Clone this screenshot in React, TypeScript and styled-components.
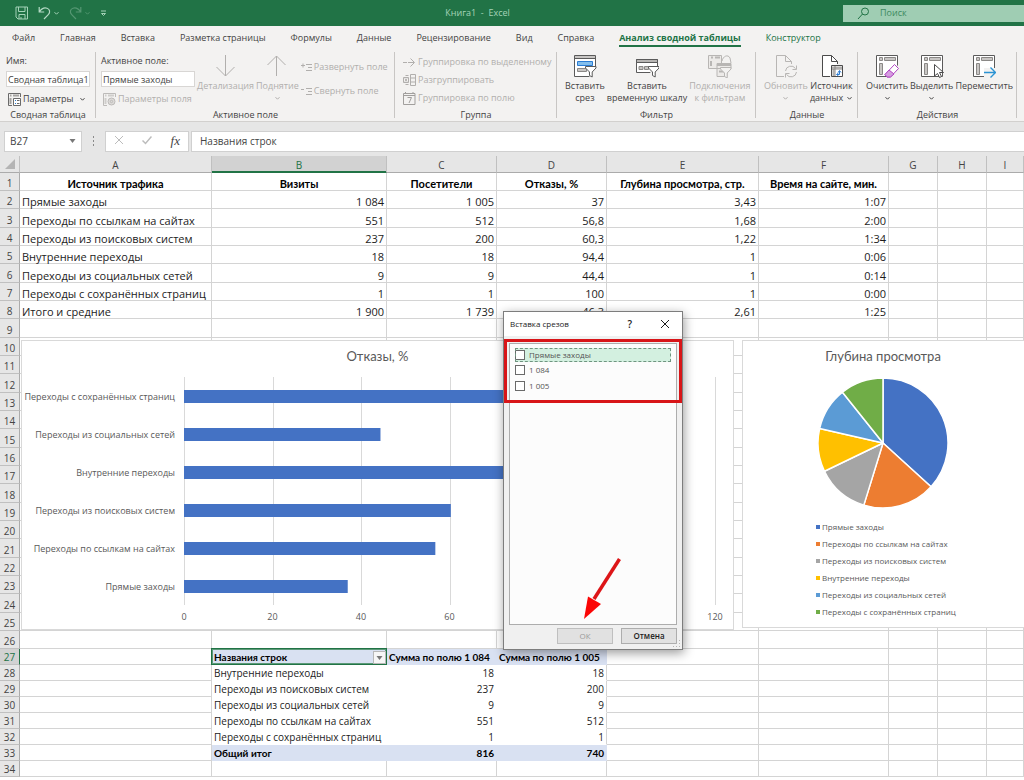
import React from "react";
import styled, { createGlobalStyle, css } from "styled-components";

const green = "#217346";
const ink = "#444444";
const faded = "#b1afad";
const gridLine = "#d4d4d4";
const titleFont = `Lato, "Open Sans", sans-serif`;

const GlobalStyle = createGlobalStyle`
  * { box-sizing: border-box; }
  body {
    margin: 0;
    background: #ffffff;
    font-family: "Open Sans", "Noto Sans", sans-serif;
    font-size: 9px;
    line-height: 12px;
    color: ${ink};
    overflow: hidden;
  }
  button, input { font: inherit; color: inherit; }
  button { background: none; border: 0; padding: 0; }
`;

/* ---------- title bar ---------- */

const TitleBar = styled.header`
  display: flex;
  align-items: center;
  height: 26px;
  background: ${green};
`;

const QuickAccess = styled.div`
  display: flex;
  align-items: center;
  gap: 9px;
  width: 112px;
  padding-left: 15px;
`;

const QuickButton = styled.button<{ $dim?: boolean }>`
  display: flex;
  align-items: center;
  gap: 2px;
  opacity: ${(p) => (p.$dim ? 0.35 : 1)};
`;

const WindowTitle = styled.div`
  flex: 1;
  text-align: center;
  white-space: pre;
  color: #a5d3b8;
`;

const SearchBox = styled.label`
  display: flex;
  align-items: center;
  gap: 10px;
  width: 181px;
  height: 17px;
  padding-left: 14px;
  background: #9fcdb3;
  color: ${green};
  input {
    width: 120px;
    padding: 0;
    border: 0;
    background: none;
    outline: 0;
    &::placeholder { color: #3d8a60; opacity: 1; }
  }
`;

/* ---------- ribbon ---------- */

const Tabs = styled.nav`
  display: flex;
  gap: 25px;
  height: 24px;
  padding: 2px 12px 0;
  background: #f3f2f1;
`;

const Tab = styled.a<{ $active?: boolean; $context?: boolean }>`
  height: 19px;
  font-size: 9px;
  line-height: 19px;
  white-space: nowrap;
  text-decoration: none;
  color: ${(p) => (p.$active || p.$context ? green : ink)};
  ${(p) =>
    p.$active &&
    css`
      font-weight: 700;
      border-bottom: 2px solid ${green};
    `}
`;

const Ribbon = styled.section`
  display: flex;
  height: 72px;
  padding-top: 2px;
  background: #f3f2f1;
  border-bottom: 1px solid #d2d0ce;
`;

const Group = styled.div<{ $width: number }>`
  display: flex;
  flex-direction: column;
  flex: none;
  width: ${(p) => p.$width}px;
  background: linear-gradient(#c8c6c4, #c8c6c4) right top / 1px 66px no-repeat;
`;

const GroupBody = styled.div<{ $pad?: number }>`
  display: flex;
  gap: 2px;
  height: 58px;
  padding: 2px ${(p) => p.$pad ?? 8}px 0;
`;

const GroupName = styled.div`
  text-align: center;
`;

const FieldStack = styled.div<{ $width: number }>`
  display: flex;
  flex-direction: column;
  flex: none;
  width: ${(p) => p.$width}px;
  label { height: 17px; line-height: 14px; }
  input {
    width: 100%;
    height: 16px;
    padding: 0 1px;
    border: 1px solid #d8d6d4;
    background: #ffffff;
    outline: 0;
  }
`;

const SmallButton = styled.button<{ $off?: boolean }>`
  display: flex;
  align-items: center;
  gap: 2px;
  height: 16px;
  white-space: nowrap;
  color: ${(p) => (p.$off ? faded : ink)};
  svg { flex: none; }
`;

const OptionsButton = styled(SmallButton)`
  margin-top: 4px;
  padding-left: 2px;
`;

const OptionsText = styled.span`
  flex: none;
  margin-right: 4px;
`;

const Stack = styled.div<{ $gap: number; $top?: number }>`
  display: flex;
  flex-direction: column;
  gap: ${(p) => p.$gap}px;
  padding-top: ${(p) => p.$top ?? 0}px;
`;

const BigButtonBox = styled.button<{ $off?: boolean }>`
  display: flex;
  flex-direction: column;
  align-items: center;
  flex: none;
  gap: 2px;
  line-height: 12px;
  white-space: nowrap;
  color: ${(p) => (p.$off ? faded : ink)};
  svg { flex: none; }
`;

const BigLabel = styled.span`
  display: flex;
  flex-direction: column;
  align-items: center;
`;

const LabelLine = styled.span`
  display: flex;
  align-items: center;
  gap: 3px;
  height: 12px;
`;

/* ---------- formula bar ---------- */

const FormulaBar = styled.section`
  display: flex;
  align-items: center;
  height: 34px;
  padding: 4px 0 0 4px;
  background: #e6e6e6;
  font-size: 10px;
`;

const NameBox = styled.label`
  display: flex;
  align-items: center;
  width: 78px;
  height: 21px;
  padding: 0 5px;
  border: 1px solid #d0d0d0;
  background: #ffffff;
  input { flex: 1; width: 40px; padding: 0; border: 0; outline: 0; font-size: 10px; }
`;

const Grip = styled.div`
  width: 23px;
  display: flex;
  justify-content: center;
`;

const FormulaButtons = styled.div`
  display: flex;
  align-items: center;
  justify-content: space-between;
  width: 84px;
  height: 21px;
  margin-right: 2px;
  padding: 0 8px;
  border: 1px solid #d0d0d0;
  background: #ffffff;
`;

const FxButton = styled.button`
  font: italic 400 13px "Liberation Serif", serif;
`;

const FormulaInput = styled.input`
  flex: 1;
  height: 21px;
  padding: 0 8px;
  border: 1px solid #d0d0d0;
  border-right: 0;
  background: #ffffff;
  font-size: 10px;
  outline: 0;
`;

/* ---------- sheet ---------- */

const Sheet = styled.main`
  position: relative;
`;

const Grid = styled.table`
  width: 100%;
  table-layout: fixed;
  border-collapse: separate;
  border-spacing: 0;
  font-size: 11px;
  line-height: 13px;
  color: #1c1c1c;
`;

const ColumnHead = styled.th<{ $selected?: boolean }>`
  height: 17px;
  padding: 2px 0 0;
  font-size: 10px;
  font-weight: 400;
  color: ${(p) => (p.$selected ? green : ink)};
  background: ${(p) => (p.$selected ? "#d2d2d2" : "#e6e6e6")};
  border-right: 1px solid #c0c0c0;
  border-bottom: 1px solid ${(p) => (p.$selected ? green : "#ababab")};
  box-shadow: ${(p) => (p.$selected ? `inset 0 -1px ${green}` : "none")};
`;

const RowHead = styled.th<{ $selected?: boolean }>`
  padding: 0;
  font-size: 10px;
  font-weight: 400;
  vertical-align: bottom;
  color: ${(p) => (p.$selected ? green : ink)};
  background: ${(p) => (p.$selected ? "#d2d2d2" : "#e6e6e6")};
  border-right: 1px solid ${(p) => (p.$selected ? green : "#ababab")};
  border-bottom: 1px solid #c0c0c0;
`;

const Row = styled.tr<{ $height: number }>`
  height: ${(p) => p.$height}px;
`;

type CellKind = "plain" | "heading" | "pivot" | "pivotBold";

const Cell = styled.td<{ $kind: CellKind; $align: string; $edge?: boolean }>`
  padding: 0 2px;
  text-align: ${(p) => p.$align};
  vertical-align: bottom;
  white-space: nowrap;
  border-right: 1px solid ${gridLine};
  border-bottom: 1px solid ${gridLine};
  ${(p) =>
    p.$kind === "heading" &&
    css`
      font-family: ${titleFont};
      font-weight: 700;
      color: #000000;
    `}
  ${(p) =>
    (p.$kind === "pivot" || p.$kind === "pivotBold") &&
    css`
      font-size: 10px;
      border-bottom-color: #ffffff;
      border-right-color: ${p.$edge ? gridLine : "#ffffff"};
    `}
  ${(p) =>
    p.$kind === "pivotBold" &&
    css`
      font-family: ${titleFont};
      font-weight: 700;
      color: #000000;
      background: #d9e1f2;
      border-bottom-color: #d9e1f2;
      border-right-color: #d9e1f2;
    `}
`;

const ActiveCell = styled.div`
  display: flex;
  align-items: center;
  justify-content: space-between;
  height: 15px;
  margin: 0 -2px;
  padding: 2px 0 0 2px;
  outline: 1px solid ${green};
  box-shadow: inset 0 0 0 1px #5c9a78;
`;

const FilterButton = styled.button`
  display: flex;
  align-items: center;
  justify-content: center;
  width: 13px;
  height: 13px;
  border: 1px solid #b8b8b8;
  background: #f6f6f6;
`;

/* ---------- floating charts ---------- */

const ChartFrame = styled.figure<{ $left: number; $width: string; $height: number }>`
  position: absolute;
  top: 184px;
  left: ${(p) => p.$left}px;
  width: ${(p) => p.$width};
  height: ${(p) => p.$height}px;
  margin: 0;
  background: #ffffff;
  border: 1px solid #d9d9d9;
  color: #595959;
`;

const ChartTitle = styled.figcaption`
  padding-top: 6px;
  font-family: ${titleFont};
  font-size: 13px;
  line-height: 18px;
  text-align: center;
`;

const Plot = styled.svg`
  display: block;
  margin-top: 1px;
  text { font-size: 9px; fill: #595959; }
`;

const PieBody = styled.div`
  display: flex;
  flex-direction: column;
  width: 280px;
`;

const PieDrawing = styled.svg`
  display: block;
  align-self: center;
  margin-top: 12px;
`;

const Legend = styled.ul`
  margin: 9px 0 0 73px;
  padding: 0;
  list-style: none;
  font-size: 8px;
  line-height: 17px;
`;

const LegendItem = styled.li<{ $color: string }>`
  display: flex;
  align-items: center;
  gap: 2px;
  &::before {
    content: "";
    width: 4px;
    height: 4px;
    background: ${(p) => p.$color};
  }
`;

/* ---------- dialog ---------- */

const Dialog = styled.div`
  position: absolute;
  top: 155px;
  left: 503px;
  width: 180px;
  height: 339px;
  display: flex;
  flex-direction: column;
  padding: 0 5px 5px;
  background: #f0f0f0;
  border: 1px solid #7d7d7d;
  box-shadow: 1px 3px 10px rgba(0, 0, 0, 0.4);
  font-size: 8px;
  color: #1c1c1c;
`;

const DialogHead = styled.div`
  display: flex;
  align-items: center;
  height: 24px;
  margin: 0 -5px 7px;
  padding: 0 12px 0 6px;
  background: #ffffff;
`;

const DialogTitle = styled.h2`
  flex: 1;
  margin: 0;
  font-size: 8px;
  font-weight: 400;
`;

const HelpButton = styled.button`
  margin-right: 28px;
  font-size: 10px;
  font-weight: 600;
`;

const CloseButton = styled.button`
  display: flex;
`;

const FieldList = styled.div`
  flex: 1;
  padding: 4px 5px;
  border: 1px solid #adadad;
  background: #fcfcfc;
`;

const FieldOption = styled.label<{ $current?: boolean }>`
  display: flex;
  align-items: center;
  gap: 4px;
  height: 16px;
  color: #555555;
  ${(p) =>
    p.$current &&
    css`
      height: 14px;
      background: #d3f0e0;
      outline: 1px dashed #6f9480;
      outline-offset: -1px;
    `}
  input {
    appearance: none;
    width: 10px;
    height: 10px;
    margin: 0;
    border: 1px solid #6a6a6a;
    background: #ffffff;
  }
`;

const DialogButtons = styled.div`
  display: flex;
  justify-content: flex-end;
  gap: 8px;
  padding: 3px 0 0;
`;

const DialogButton = styled.button`
  width: 56px;
  height: 16px;
  border: 1px solid #adadad;
  background: #e1e1e1;
  line-height: 12px;
  font-weight: 600;
  &:disabled { color: #9a9a9a; border-color: #bfbfbf; font-weight: 400; }
`;

const RedFrame = styled.div`
  position: absolute;
  top: 27px;
  left: 0;
  right: 0;
  height: 64px;
  border: 3px solid #d81518;
  pointer-events: none;
`;

const RedArrow = styled.svg`
  position: absolute;
  top: 244px;
  left: 78px;
  pointer-events: none;
`;

const Corner = styled.svg`
  position: absolute;
  right: 1px;
  bottom: 1px;
`;

/* ---------- icons ---------- */

const Chevron = ({ color = ink }: { color?: string }) => (
  <svg width="7" height="5" viewBox="0 0 7 5" fill="none" stroke={color}>
    <path d="M1.5 1.2 3.5 3.2 5.5 1.2" />
  </svg>
);

const Triangle = () => (
  <svg width="7" height="4" viewBox="0 0 7 4" fill="#777777">
    <path d="M0.5 0h6L3.5 4z" />
  </svg>
);

const SaveIcon = () => (
  <svg width="14" height="14" viewBox="0 0 14 14" fill="none" stroke="#a5d3b8">
    <path d="M1 1h11.5v12H3L1 11zM3.5 1v4.5h6.5V1M4 13V8.5h6V13M6 11v2" />
  </svg>
);

const UndoIcon = ({ flip }: { flip?: boolean }) => (
  <svg width="13" height="14" viewBox="0 0 13 14" fill="none" stroke="#b5dac5" strokeWidth="1.2">
    <path
      transform={flip ? "matrix(-1 0 0 1 13 0)" : undefined}
      d="M1.2 1v5h5M1.4 5.8C3.6 2.6 6.6 1.4 9 2.2c3 1 3.3 4.2 1.5 6.2L6 13"
    />
  </svg>
);

const CustomizeIcon = () => (
  <svg width="7" height="7" viewBox="0 0 7 7" fill="none" stroke="#a5d3b8">
    <path d="M1 1h5M1.5 3.5 3.5 5.5 5.5 3.5z" />
  </svg>
);

const SearchIcon = () => (
  <svg width="13" height="13" viewBox="0 0 13 13" fill="none" stroke={green}>
    <circle cx="8" cy="4.5" r="3.5" />
    <path d="M5.5 7 1 12" />
  </svg>
);

const PivotSmall = ({ off, gear }: { off?: boolean; gear?: boolean }) => {
  const line = off ? "#bdbbb9" : "#6a6a6a";
  const block = off ? "#cfcdcb" : "#a5a3a1";
  return (
    <svg width="13" height="13" viewBox="0 0 13 13" fill="none" stroke={line}>
      <path d="M12.5 4V.5H.5v12H4" />
      <path d="M2 2.5h1.500M5 2.500h6M2.500 5v6" stroke={block} strokeWidth="2" />
      {gear ? (
        <g>
          <circle cx="8.500" cy="8.500" r="3.500" fill="#dddbd9" />
          <circle cx="8.500" cy="8.500" r="1.200" />
        </g>
      ) : (
        <g>
          <path d="M5.500 5.500h7v7h-7z" fill="#fff" />
          <path d="M7 7.500h1M7 10.500h1" stroke="#2b7cd3" />
          <path d="M9 7.500h2.500M9 10.500h2.500" />
        </g>
      )}
    </svg>
  );
};

const ArrowBig = ({ up }: { up?: boolean }) => (
  <svg width="22" height="24" viewBox="0 0 22 24" fill="none" stroke={faded}>
    <path d={up ? "M10.500 22V2M1.500 11l9-9 9 9" : "M10.500 1v21M1.500 13l9 9 9-9"} />
  </svg>
);

const ExpandIcon = ({ minus }: { minus?: boolean }) => (
  <svg width="11" height="9" viewBox="0 0 11 9" fill="none" stroke={faded}>
    <path d="M5 1.500h6M7 4.500h4M5 7.500h6" />
    <path d={minus ? "M0 2.500h3" : "M0 2.500h4M2 .5v4"} />
  </svg>
);

const GroupArrowIcon = () => (
  <svg width="13" height="11" viewBox="0 0 13 11" fill="none" stroke={faded}>
    <path d="M0 5.500h4M5 5.500h6M7.500 1.500l4 4-4 4" />
  </svg>
);

const UngroupIcon = () => (
  <svg width="13" height="12" viewBox="0 0 13 12" fill="none" stroke={faded}>
    <path d="M7.500.5h5v11h-5zM7.500 4h5M7.500 8h5M5.500 1.500h-3M5.500 10.500h-3M.5 3.500h5v5h-5zM2 4.500l2 3M4 4.500l-2 3" />
  </svg>
);

const CalendarIcon = () => (
  <svg width="13" height="13" viewBox="0 0 13 13" fill="none" stroke="#a19f9d">
    <path d="M.5 1.500h11.500v11H.5zM.5 3.500h11.500M2.500 0v2M10 0v2M4.500 5.500h4L6 11" />
  </svg>
);

const Funnel = ({ x, y, line, fill = "#fff" }: { x: number; y: number; line: string; fill?: string }) => (
  <path transform={`translate(${x} ${y})`} d="M.5.500h10.500v1.500L7.200 6v5L4.500 9.500V6L.5 2z" fill={fill} stroke={line} />
);

const SlicerIcon = () => (
  <svg width="24" height="24" viewBox="0 0 24 24" fill="none" stroke="#5a5a5a">
    <path d="M1.500 1.500h21v21h-21z" fill="#fff" />
    <path d="M2 2h20v2.500H2z" fill="#c8c6c4" stroke="none" />
    <path d="M1.500 4.500h21" />
    <path d="M4.500 7.500h15v4h-15z" fill="#83beec" stroke="#2b7cd3" />
    <path d="M4.500 14.500h9v3h-9z" fill="#c8c6c4" stroke="#8a8886" />
    <path d="M13 13h11v11H17z" fill="#f3f2f1" stroke="none" />
    <Funnel x={12} y={12} line="#5a5a5a" />
  </svg>
);

const TimelineIcon = () => (
  <svg width="24" height="24" viewBox="0 0 24 24" fill="none" stroke="#5a5a5a">
    <path d="M1.500 5.500h21v13h-21z" fill="#fff" />
    <path d="M1.500 5.500h21v3h-21z" fill="#b8b6b4" />
    <path d="M4 12.500h4v3H4zM9.500 12.500h4v3h-4z" fill="#c8c6c4" stroke="#8a8886" />
    <path d="M14 14h10v10h-7z" fill="#f3f2f1" stroke="none" />
    <Funnel x={13} y={12} line="#5a5a5a" />
  </svg>
);

const ConnectionsIcon = () => (
  <svg width="24" height="24" viewBox="0 0 24 24" fill="#eceae8" stroke="#b8b6b4">
    <path d="M.5 1.500h13v13H.5z" />
    <path d="M3 3.500h2M7 3.500h5M3 7v5" strokeWidth="2" />
    <path d="M14 7c1-5 6-7 8-3l1 5" fill="none" />
    <path d="M9 9.500h14v5H9zM9 14.500h10v8H9z" />
    <path d="M9 11h14M11 17.500h5" strokeWidth="2" />
    <Funnel x={12} y={13} line="#b8b6b4" fill="#f3f2f1" />
  </svg>
);

const RefreshIcon = () => (
  <svg width="24" height="24" viewBox="0 0 24 24" fill="none" stroke="#b8b6b4">
    <path d="M10 22.500H2.500v-21h9l6 6V10M11.500 1.500v6h6" />
    <path d="M11.500 17a5.500 5.500 0 0 1 10-2.500M22.500 11.500v4h-4M22.500 18a5.500 5.500 0 0 1-10 2.500M11.500 23.500v-4h4" />
  </svg>
);

const SourceIcon = () => (
  <svg width="24" height="24" viewBox="0 0 24 24" fill="none" stroke="#4a4a4a">
    <path d="M10 22.500H2.500v-21h9l6 6V10" fill="#fff" />
    <path d="M11.500 1.500v6h6" />
    <path d="M11.500 11.500h11v11h-11z" fill="#ffffff" />
    <path d="M12 13.500h10M13.500 15v7" stroke="#b0aeac" strokeWidth="2" />
    <path d="M12 15h10M15 12v10" stroke="#8a8886" />
    <path d="M17 20.500h2.500V17M18 18.500l1.500-2 1.500 2M18.500 19l-2 1.500 2 1.500" stroke="#2b7cd3" />
  </svg>
);

const PivotBase = () => (
  <g>
    <path d="M1.500 1.500h21v21h-21z" fill="#fff" stroke="#5a5a5a" />
    <path d="M4.500 3.500h3v3h-3zM9.500 3.500h11v3h-11zM4.500 9.500h3v11h-3z" fill="#c8c6c4" stroke="#8a8886" />
  </g>
);

const ClearIcon = () => (
  <svg width="24" height="24" viewBox="0 0 24 24" fill="none">
    <PivotBase />
    <path d="M11 24h13V10z" fill="#f3f2f1" />
    <path d="M19.500 10.500l4 4-8 8.500h-3.500l-2-2.500z" fill="#fff" stroke="#b146c2" />
    <path d="M14 16l5 4-3.500 3h-3.500l-2-2.500z" fill="#d59de0" stroke="#b146c2" />
  </svg>
);

const SelectIcon = () => (
  <svg width="24" height="24" viewBox="0 0 24 24" fill="none">
    <PivotBase />
    <path d="M14.500 10.500v11.500l3-2.500 2 4 2-1-2-4h4z" fill="#fff" stroke="#4a4a4a" />
  </svg>
);

const MoveIcon = () => (
  <svg width="24" height="24" viewBox="0 0 24 24" fill="none">
    <PivotBase />
    <path d="M12 14h12v10H12z" fill="#f3f2f1" />
    <path d="M12 18.500h11M18.500 13.500l5 5-5 5" stroke="#2b93d3" strokeWidth="1.400" />
  </svg>
);

/* ---------- data ---------- */

const sources: string[][] = [
  ["Источник трафика", "Визиты", "Посетители", "Отказы, %", "Глубина просмотра, стр.", "Время на сайте, мин."],
  ["Прямые заходы", "1 084", "1 005", "37", "3,43", "1:07"],
  ["Переходы по ссылкам на сайтах", "551", "512", "56,8", "1,68", "2:00"],
  ["Переходы из поисковых систем", "237", "200", "60,3", "1,22", "1:34"],
  ["Внутренние переходы", "18", "18", "94,4", "1", "0:06"],
  ["Переходы из социальных сетей", "9", "9", "44,4", "1", "0:14"],
  ["Переходы с сохранённых страниц", "1", "1", "100", "1", "0:00"],
  ["Итого и средние", "1 900", "1 739", "46,3", "2,61", "1:25"],
];

const pivot: string[][] = [
  ["Названия строк", "Сумма по полю 1 084", "Сумма по полю 1 005"],
  ["Внутренние переходы", "18", "18"],
  ["Переходы из поисковых систем", "237", "200"],
  ["Переходы из социальных сетей", "9", "9"],
  ["Переходы по ссылкам на сайтах", "551", "512"],
  ["Переходы с сохранённых страниц", "1", "1"],
  ["Общий итог", "816", "740"],
];

const pivotStart = 27;
const rowCount = 34;
const columns = [
  { name: "A", width: 192 },
  { name: "B", width: 175 },
  { name: "C", width: 110 },
  { name: "D", width: 110 },
  { name: "E", width: 152 },
  { name: "F", width: 130 },
  { name: "G", width: 49 },
  { name: "H", width: 49 },
  { name: "I", width: 0 },
];

const bounce = [
  { name: "Переходы с сохранённых страниц", value: 100 },
  { name: "Переходы из социальных сетей", value: 44.4 },
  { name: "Внутренние переходы", value: 94.4 },
  { name: "Переходы из поисковых систем", value: 60.3 },
  { name: "Переходы по ссылкам на сайтах", value: 56.8 },
  { name: "Прямые заходы", value: 37 },
];

const depth = [
  { name: "Прямые заходы", value: 3.43, color: "#4472c4" },
  { name: "Переходы по ссылкам на сайтах", value: 1.68, color: "#ed7d31" },
  { name: "Переходы из поисковых систем", value: 1.22, color: "#a5a5a5" },
  { name: "Внутренние переходы", value: 1, color: "#ffc000" },
  { name: "Переходы из социальных сетей", value: 1, color: "#5b9bd5" },
  { name: "Переходы с сохранённых страниц", value: 1, color: "#70ad47" },
];

/* ---------- parts ---------- */

type BigButtonProps = { icon: React.ReactNode; lines: string[]; off?: boolean; menu?: boolean };

const BigButton = ({ icon, lines, off, menu }: BigButtonProps) => {
  const arrow = <Chevron color={off ? faded : ink} />;
  return (
    <BigButtonBox $off={off} type="button">
      {icon}
      <BigLabel>
        {lines.map((line, i) => (
          <LabelLine key={line}>
            {line}
            {menu && i === 1 && arrow}
          </LabelLine>
        ))}
        {menu && lines.length === 1 && <LabelLine>{arrow}</LabelLine>}
      </BigLabel>
    </BigButtonBox>
  );
};

const renderCell = (row: number, col: number) => {
  if (row <= sources.length) {
    const kind: CellKind = row === 1 ? "heading" : "plain";
    const align = row === 1 ? "center" : col === 0 ? "left" : "right";
    return (
      <Cell key={col} $kind={kind} $align={align}>
        {sources[row - 1][col]}
      </Cell>
    );
  }
  const line = pivot[row - pivotStart];
  if (line && col >= 1 && col <= 3) {
    const first = row === pivotStart;
    const bold = first || row === pivotStart + pivot.length - 1;
    const text = line[col - 1];
    return (
      <Cell
        key={col}
        $kind={bold ? "pivotBold" : "pivot"}
        $align={col === 1 || first ? "left" : "right"}
        $edge={col === 3}
      >
        {first && col === 1 ? (
          <ActiveCell>
            {text}
            <FilterButton type="button" aria-label="Фильтр">
              <Triangle />
            </FilterButton>
          </ActiveCell>
        ) : (
          text
        )}
      </Cell>
    );
  }
  return <Cell key={col} $kind="plain" $align="left" />;
};

const rowHeight = (row: number) => (row >= pivotStart ? 16 : row % 3 === 0 ? 19 : 18);

const BarChart = () => {
  const left = 162;
  const unit = 531 / 120;
  return (
    <ChartFrame $left={21} $width="713px" $height={290}>
      <ChartTitle>Отказы, %</ChartTitle>
      <Plot width="711" height="260" viewBox="0 0 711 260">
        {[0, 20, 40, 60, 80, 100, 120].map((tick) => (
          <g key={tick}>
            <path d={`M${Math.round(left + tick * unit) + 0.5} 11v228`} stroke="#d9d9d9" />
            <text x={left + tick * unit} y="254" textAnchor="middle">
              {tick}
            </text>
          </g>
        ))}
        {bounce.map((bar, i) => (
          <g key={bar.name}>
            <rect x={left} y={24 + i * 38} width={bar.value * unit} height="13" fill="#4472c4" />
            <text x={left - 9} y={34 + i * 38} textAnchor="end">
              {bar.name}
            </text>
          </g>
        ))}
      </Plot>
    </ChartFrame>
  );
};

const PieChart = () => {
  const total = depth.reduce((sum, d) => sum + d.value, 0);
  let passed = 0;
  const point = (share: number) => {
    const a = share * 2 * Math.PI;
    return `${65 + 65 * Math.sin(a)} ${65 - 65 * Math.cos(a)}`;
  };
  return (
    <ChartFrame $left={742} $width="calc(100% - 741px)" $height={288}>
      <PieBody>
        <ChartTitle>Глубина просмотра</ChartTitle>
        <PieDrawing width="132" height="132" viewBox="-1 -1 132 132">
          {depth.map((d) => {
            const from = passed / total;
            passed += d.value;
            return (
              <path
                key={d.name}
                d={`M65 65L${point(from)}A65 65 0 0 1 ${point(passed / total)}z`}
                fill={d.color}
                stroke="#ffffff"
                strokeWidth="1.500"
                strokeLinejoin="round"
              />
            );
          })}
        </PieDrawing>
        <Legend>
          {depth.map((d) => (
            <LegendItem key={d.name} $color={d.color}>
              {d.name}
            </LegendItem>
          ))}
        </Legend>
      </PieBody>
    </ChartFrame>
  );
};

const SlicerDialog = () => (
  <Dialog role="dialog" aria-labelledby="dialog-title">
    <DialogHead>
      <DialogTitle id="dialog-title">Вставка срезов</DialogTitle>
      <HelpButton type="button">?</HelpButton>
      <CloseButton type="button" aria-label="Закрыть">
        <svg width="10" height="10" viewBox="0 0 10 10" stroke="#1c1c1c">
          <path d="M1 1l8 8M9 1 1 9" />
        </svg>
      </CloseButton>
    </DialogHead>
    <FieldList>
      {["Прямые заходы", "1 084", "1 005"].map((name, i) => (
        <FieldOption key={name} $current={i === 0}>
          <input type="checkbox" />
          {name}
        </FieldOption>
      ))}
    </FieldList>
    <DialogButtons>
      <DialogButton type="button" disabled>
        ОК
      </DialogButton>
      <DialogButton type="button">Отмена</DialogButton>
    </DialogButtons>
    <Corner width="8" height="8" viewBox="0 0 8 8" fill="#b5b5b5">
      <path d="M6 0h1v1H6zM3 3h1v1H3zM6 3h1v1H6zM0 6h1v1H0zM3 6h1v1H3zM6 6h1v1H6z" />
    </Corner>
    <RedFrame />
    <RedArrow width="42" height="66" viewBox="0 0 42 66">
      <path d="M37.500 3 12 43" stroke="#dd1518" strokeWidth="3.500" />
      <path d="M2 63 6 40.500 19 48z" fill="#fb0505" />
    </RedArrow>
  </Dialog>
);

const tabs = ["Файл", "Главная", "Вставка", "Разметка страницы", "Формулы", "Данные", "Рецензирование", "Вид", "Справка"];

export default function App() {
  return (
    <>
      <GlobalStyle />
      <TitleBar>
        <QuickAccess>
          <QuickButton type="button" aria-label="Сохранить">
            <SaveIcon />
          </QuickButton>
          <QuickButton type="button" aria-label="Отменить">
            <UndoIcon />
            <Chevron color="#a5d3b8" />
          </QuickButton>
          <QuickButton type="button" aria-label="Вернуть" $dim>
            <UndoIcon flip />
            <Chevron color="#a5d3b8" />
          </QuickButton>
          <QuickButton type="button" aria-label="Настройка панели">
            <CustomizeIcon />
          </QuickButton>
        </QuickAccess>
        <WindowTitle>{"Книга1  -  Excel"}</WindowTitle>
        <SearchBox>
          <SearchIcon />
          <input placeholder="Поиск" aria-label="Поиск" />
        </SearchBox>
      </TitleBar>

      <Tabs>
        {tabs.map((name) => (
          <Tab key={name} href="#">
            {name}
          </Tab>
        ))}
        <Tab href="#" $active>
          Анализ сводной таблицы
        </Tab>
        <Tab href="#" $context>
          Конструктор
        </Tab>
      </Tabs>

      <Ribbon>
        <Group $width={96}>
          <GroupBody $pad={6}>
            <FieldStack $width={84}>
              <label htmlFor="pivot-name">Имя:</label>
              <input id="pivot-name" defaultValue="Сводная таблица18" />
              <OptionsButton type="button">
                <PivotSmall />
                <OptionsText>Параметры</OptionsText>
                <Chevron />
              </OptionsButton>
            </FieldStack>
          </GroupBody>
          <GroupName>Сводная таблица</GroupName>
        </Group>

        <Group $width={299}>
          <GroupBody $pad={5}>
            <FieldStack $width={94}>
              <label htmlFor="active-field">Активное поле:</label>
              <input id="active-field" defaultValue="Прямые заходы" />
              <OptionsButton type="button" $off>
                <PivotSmall off gear />
                Параметры поля
              </OptionsButton>
            </FieldStack>
            <BigButton icon={<ArrowBig />} lines={["Детализация"]} off />
            <BigButton icon={<ArrowBig up />} lines={["Поднятие"]} off menu />
            <Stack $gap={8} $top={5}>
              <SmallButton type="button" $off>
                <ExpandIcon />
                Развернуть поле
              </SmallButton>
              <SmallButton type="button" $off>
                <ExpandIcon minus />
                Свернуть поле
              </SmallButton>
            </Stack>
          </GroupBody>
          <GroupName>Активное поле</GroupName>
        </Group>

        <Group $width={162}>
          <GroupBody>
            <Stack $gap={2}>
              <SmallButton type="button" $off>
                <GroupArrowIcon />
                Группировка по выделенному
              </SmallButton>
              <SmallButton type="button" $off>
                <UngroupIcon />
                Разгруппировать
              </SmallButton>
              <SmallButton type="button" $off>
                <CalendarIcon />
                Группировка по полю
              </SmallButton>
            </Stack>
          </GroupBody>
          <GroupName>Группа</GroupName>
        </Group>

        <Group $width={199}>
          <GroupBody>
            <BigButton icon={<SlicerIcon />} lines={["Вставить", "срез"]} />
            <BigButton icon={<TimelineIcon />} lines={["Вставить", "временную шкалу"]} />
            <BigButton icon={<ConnectionsIcon />} lines={["Подключения", "к фильтрам"]} off />
          </GroupBody>
          <GroupName>Фильтр</GroupName>
        </Group>

        <Group $width={102}>
          <GroupBody>
            <BigButton icon={<RefreshIcon />} lines={["Обновить"]} off menu />
            <BigButton icon={<SourceIcon />} lines={["Источник", "данных"]} menu />
          </GroupBody>
          <GroupName>Данные</GroupName>
        </Group>

        <Group $width={159}>
          <GroupBody>
            <BigButton icon={<ClearIcon />} lines={["Очистить"]} menu />
            <BigButton icon={<SelectIcon />} lines={["Выделить"]} menu />
            <BigButton icon={<MoveIcon />} lines={["Переместить"]} />
          </GroupBody>
          <GroupName>Действия</GroupName>
        </Group>
      </Ribbon>

      <FormulaBar>
        <NameBox>
          <input defaultValue="B27" aria-label="Имя ячейки" />
          <Triangle />
        </NameBox>
        <Grip>
          <svg width="2" height="10" viewBox="0 0 2 10" fill="#8a8a8a">
            <path d="M0 0h1v2H0zM0 4h1v2H0zM0 8h1v2H0z" />
          </svg>
        </Grip>
        <FormulaButtons>
          <button type="button" aria-label="Отмена ввода">
            <svg width="10" height="10" viewBox="0 0 10 10" stroke="#bcbcbc">
              <path d="M1 1l8 8M9 1 1 9" />
            </svg>
          </button>
          <button type="button" aria-label="Ввод">
            <svg width="10" height="10" viewBox="0 0 10 10" fill="none" stroke="#bcbcbc" strokeWidth="1.500">
              <path d="M.5 5.500 3.500 8.500 9.500 1.500" />
            </svg>
          </button>
          <FxButton type="button">fx</FxButton>
        </FormulaButtons>
        <FormulaInput defaultValue="Названия строк" aria-label="Строка формул" />
      </FormulaBar>

      <Sheet>
        <Grid>
          <colgroup>
            <col width="20" />
            {columns.map((c) => (
              <col key={c.name} width={c.width || undefined} />
            ))}
          </colgroup>
          <thead>
            <tr>
              <ColumnHead>
                <svg width="10" height="10" viewBox="0 0 10 10" fill="#b4b4b4" aria-hidden="true">
                  <path d="M10 0v10H0z" />
                </svg>
              </ColumnHead>
              {columns.map((c) => (
                <ColumnHead key={c.name} $selected={c.name === "B"}>
                  {c.name}
                </ColumnHead>
              ))}
            </tr>
          </thead>
          <tbody>
            {Array.from({ length: rowCount }, (_, i) => i + 1).map((row) => (
              <Row key={row} $height={rowHeight(row)}>
                <RowHead $selected={row === pivotStart}>{row}</RowHead>
                {columns.map((_, col) => renderCell(row, col))}
              </Row>
            ))}
          </tbody>
        </Grid>
        <BarChart />
        <PieChart />
        <SlicerDialog />
      </Sheet>
    </>
  );
}
